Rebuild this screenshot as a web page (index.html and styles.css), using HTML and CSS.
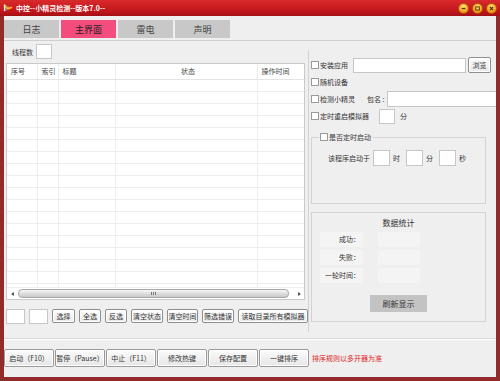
FILE: index.html
```html
<!DOCTYPE html>
<html lang="zh-CN">
<head>
  <meta charset="UTF-8">
  <title>中控--小精灵检测--版本7.0--</title>
  <link rel="stylesheet" href="styles.css">
</head>
<body>
  <div class="window">

    <!-- Title bar -->
    <div class="titlebar">
      <svg class="logo" width="10" height="10" viewBox="0 0 10 10">
        <path d="M1 1 L1 9 L9 5 Z" fill="#fff" opacity="0.25"/>
        <path d="M1.5 2 Q3 7 8.5 4.5" stroke="#ffb020" stroke-width="1.8" fill="none" stroke-linecap="round"/>
        <path d="M1.5 2 L1.5 8" stroke="#fff" stroke-width="1.2"/>
      </svg>
      <span class="title">中控--小精灵检测--版本7.0--</span>
      <div class="win-btns">
        <span class="win-btn">
          <svg width="10" height="10" viewBox="0 0 10 10"><path d="M3 5 H7" stroke="#5a2a00" stroke-width="1.4"/></svg>
        </span>
        <span class="win-btn">
          <svg width="10" height="10" viewBox="0 0 10 10"><rect x="3" y="3.2" width="4" height="3.6" stroke="#5a2a00" stroke-width="1" fill="none"/></svg>
        </span>
        <span class="win-btn">
          <svg width="10" height="10" viewBox="0 0 10 10"><path d="M3.2 3.2 L6.8 6.8 M6.8 3.2 L3.2 6.8" stroke="#5a2a00" stroke-width="1.4"/></svg>
        </span>
      </div>
    </div>

    <div class="client">
      <!-- Tabs -->
      <div class="tabs">
        <div class="tab">日志</div>
        <div class="tab active">主界面</div>
        <div class="tab">雷电</div>
        <div class="tab">声明</div>
      </div>

      <div class="main">
        <!-- Left: list -->
        <div class="left">
          <div class="thread-row">
            <span>线程数</span>
            <span class="box w16"></span>
          </div>

          <div class="grid">
            <div class="grid-body">
              <table>
                <colgroup>
                  <col style="width:30px">
                  <col style="width:21px">
                  <col style="width:57px">
                  <col style="width:142px">
                  <col style="width:47px">
                </colgroup>
                <thead>
                  <tr>
                    <th>序号</th>
                    <th>索引</th>
                    <th>标题</th>
                    <th class="center">状态</th>
                    <th>操作时间</th>
                  </tr>
                </thead>
                <tbody id="rows"></tbody>
              </table>
            </div>
            <div class="hscroll">
              <span class="arrow-left"></span>
              <div class="track"><span class="grip"></span></div>
              <span class="arrow-right"></span>
            </div>
          </div>

          <div class="btn-row">
            <span class="box w19"></span>
            <span class="box w19"></span>
            <button class="btn" style="width:23px">选择</button>
            <button class="btn" style="width:22px">全选</button>
            <button class="btn" style="width:22px">反选</button>
            <button class="btn" style="width:32px">清空状态</button>
            <button class="btn" style="width:31px">清空时间</button>
            <button class="btn" style="width:32px">筛选错误</button>
            <button class="btn" style="width:70px">读取目录所有模拟器</button>
          </div>
        </div>

        <!-- Right: settings -->
        <div class="side">
          <div class="opt">
            <span class="cb"></span><span>安装应用</span>
            <span class="box apk"></span>
            <button class="btn browse">浏览</button>
          </div>
          <div class="opt">
            <span class="cb"></span><span>随机设备</span>
          </div>
          <div class="opt">
            <span class="cb"></span><span>检测小精灵</span>
            <span class="pkg-label">包名 :</span>
            <span class="box pkg"></span>
          </div>
          <div class="opt">
            <span class="cb"></span><span>定时重启模拟器</span>
            <span class="box restart"></span>
            <span class="min-label">分</span>
          </div>

          <fieldset class="timer">
            <legend><span class="cb"></span>是否定时启动</legend>
            <div class="time-row">
              <span>该程序启动于</span>
              <span class="box w17"></span><span class="unit">时</span>
              <span class="box w17"></span><span class="unit">分</span>
              <span class="box w17"></span><span class="unit">秒</span>
            </div>
          </fieldset>

          <div class="stats">
            <div class="stats-title">数据统计</div>
            <div class="stat-row"><span class="stat-label">成功：</span><span class="stat-value"></span></div>
            <div class="stat-row"><span class="stat-label">失败：</span><span class="stat-value"></span></div>
            <div class="stat-row"><span class="stat-label">一轮时间：</span><span class="stat-value"></span></div>
            <button class="refresh">刷新显示</button>
          </div>
        </div>
      </div>

      <!-- Bottom toolbar -->
      <div class="footer">
        <button class="fbtn">启动（F10）</button>
        <button class="fbtn">暂停（Pause）</button>
        <button class="fbtn">中止（F11）</button>
        <button class="fbtn">修改热键</button>
        <button class="fbtn">保存配置</button>
        <button class="fbtn">一键排序</button>
        <span class="note">排序规则以多开器为准</span>
      </div>
    </div>
  </div>

  <script>
    // empty list rows
    const rows = document.getElementById("rows");
    for (let i = 0; i < 18; i++) {
      const tr = document.createElement("tr");
      tr.innerHTML = "<td></td><td></td><td></td><td></td><td></td>";
      rows.appendChild(tr);
    }
  </script>
</body>
</html>
```

FILE: styles.css
```css
* {
  box-sizing: border-box;
}

body {
  margin: 0;
  font-family: "Noto Sans CJK SC", "Liberation Sans", sans-serif;
  font-size: 7px;
  color: #333;
  background: #fff;
}

.window {
  width: 500px;
  height: 381px;
  background: #922b2b;
  display: flex;
  flex-direction: column;
}

/* Title bar */
.titlebar {
  height: 16px;
  background: linear-gradient(#d92a2c, #c0161b 70%, #a31015);
  display: flex;
  align-items: center;
  padding: 0 3px;
  color: #fff;
}

.logo {
  margin-right: 3px;
}

.title {
  font-size: 7px;
  font-weight: bold;
}

.win-btns {
  margin-left: auto;
  display: flex;
  gap: 3px;
}

.win-btn {
  width: 11px;
  height: 11px;
  border-radius: 50%;
  background: radial-gradient(circle at 50% 30%, #ffe27a, #f5a623 60%, #d9780c);
  border: 1px solid #b85a08;
  display: flex;
  align-items: center;
  justify-content: center;
}

.win-btn svg {
  width: 9px;
  height: 9px;
}

.client {
  flex: 1;
  margin: 0 4px 4px;
  background: #efefef;
  display: flex;
  flex-direction: column;
}

/* Tabs */
.tabs {
  display: flex;
  gap: 2px;
  height: 25px;
  padding: 4px 0 2px;
  border-bottom: 1px solid #cfcfcf;
}

.tab {
  width: 55px;
  background: #c8c8c8;
  display: flex;
  align-items: center;
  justify-content: center;
  font-size: 9px;
  color: #444;
}

.tab.active {
  background: #f24d7d;
  color: #222;
}

.main {
  display: flex;
  height: 297px;
}

/* Left column */
.left {
  width: 304px;
  padding: 3px 0 0 2px;
}

.thread-row {
  display: flex;
  align-items: center;
  gap: 3px;
  height: 15px;
  padding-left: 6px;
}

.box {
  display: inline-block;
  flex-shrink: 0;
  background: #fff;
  border: 1px solid #c6c6c6;
  height: 15px;
}

.w16 { width: 16px; }
.w17 { width: 17px; height: 16px; }
.w19 { width: 19px; }

.grid {
  margin-top: 4px;
  width: 299px;
  height: 237px;
  background: #fff;
  border: 1px solid #c9c9c9;
  display: flex;
  flex-direction: column;
}

.grid-body {
  flex: 1;
  overflow: hidden;
}

.grid table {
  border-collapse: collapse;
  table-layout: fixed;
  width: 297px;
}

.grid th {
  height: 15px;
  font-weight: normal;
  text-align: left;
  padding: 0 0 0 4px;
  color: #444;
  border-left: 1px solid #ededed;
  border-bottom: 1px solid #e4e4e4;
}

.grid th:first-child,
.grid td:first-child {
  border-left: none;
}

.grid th.center {
  text-align: center;
}

.grid td {
  height: 12px;
  border-left: 1px solid #eeeeee;
  border-bottom: 1px solid #eeeeee;
}

.hscroll {
  height: 12px;
  display: flex;
  align-items: center;
  border-top: 1px solid #f0f0f0;
}

.arrow-left {
  width: 0;
  height: 0;
  margin: 0 4px 0 4px;
  border-top: 2px solid transparent;
  border-bottom: 2px solid transparent;
  border-right: 3px solid #555;
}

.arrow-right {
  width: 0;
  height: 0;
  margin: 0 3px 0 9px;
  border-top: 2px solid transparent;
  border-bottom: 2px solid transparent;
  border-left: 3px solid #555;
}

.track {
  flex: 1;
  height: 9px;
  border: 1px solid #a8a8a8;
  border-radius: 4px;
  background: linear-gradient(#f7f7f7, #dedede 50%, #c9c9c9);
  display: flex;
  align-items: center;
  justify-content: center;
}

.grip {
  width: 5px;
  height: 3px;
  background: repeating-linear-gradient(90deg, #777 0 1px, transparent 1px 2px);
}

.btn-row {
  margin-top: 8px;
  display: flex;
  align-items: center;
  gap: 4px;
  height: 16px;
}

.btn {
  height: 14px;
  padding: 0;
  font-family: inherit;
  font-size: 7px;
  color: #333;
  background: linear-gradient(#fdfdfd, #e9e9e9);
  border: 1px solid #8e8e8e;
  border-radius: 2px;
  box-shadow: inset 0 0 0 1px #fff;
  white-space: nowrap;
  flex-shrink: 0;
}

/* Right column */
.side {
  flex: 1;
  margin-top: 9px;
  height: 282px;
  border-left: 1px solid #d2d2d2;
  padding: 7px 0 0 2px;
  min-width: 0;
  overflow: hidden;
}

.opt {
  display: flex;
  align-items: center;
  height: 16px;
  margin-bottom: 1px;
  white-space: nowrap;
}

.opt span {
  flex-shrink: 0;
}

.cb {
  display: inline-block;
  flex-shrink: 0;
  width: 8px;
  height: 8px;
  border: 1px solid #9a9a9a;
  background: #fff;
  margin-right: 1px;
}

.apk {
  width: 113px;
  margin-left: 5px;
}

.browse {
  width: 23px;
  height: 16px;
  margin-left: 2px;
}

.pkg-label {
  margin-left: 12px;
}

.pkg {
  width: 112px;
  height: 16px;
  margin-left: 2px;
}

.restart {
  width: 16px;
  margin-left: 10px;
}

.min-label {
  margin-left: 5px;
}

.timer {
  margin: 8px 0 0 0;
  width: 175px;
  height: 72px;
  border: 1px solid #d3d3d3;
  padding: 8px 0 0 16px;
}

.timer legend {
  margin-left: -9px;
  padding: 0 2px 0 1px;
  display: flex;
  align-items: center;
  line-height: 10px;
}

.time-row {
  display: flex;
  align-items: center;
  gap: 3px;
  white-space: nowrap;
}

.unit {
  width: 10px;
}

.stats {
  margin-top: 8px;
  width: 175px;
  height: 110px;
  border: 1px solid #d3d3d3;
  padding: 4px 0 0 8px;
  display: flex;
  flex-direction: column;
}

.stats-title {
  text-align: center;
  font-size: 8px;
  height: 12px;
  line-height: 12px;
  padding-right: 8px;
  margin-bottom: 3px;
}

.stat-row {
  display: flex;
  gap: 15px;
  margin-bottom: 3px;
}

.stat-label {
  width: 43px;
  height: 15px;
  line-height: 15px;
  text-align: right;
  padding-right: 3px;
  background: #f4f4f4;
}

.stat-value {
  width: 42px;
  height: 15px;
  background: #f4f4f4;
}

.refresh {
  align-self: center;
  margin: 9px 8px 0 0;
  width: 57px;
  height: 17px;
  border: none;
  background: #c3c3c3;
  font-family: inherit;
  font-size: 8px;
  color: #333;
}

/* Bottom toolbar */
.footer {
  flex: 1;
  border-top: 1px solid #d8d8d8;
  box-shadow: inset 0 1px 0 #fff;
  display: flex;
  align-items: flex-start;
  gap: 1px;
  padding: 10px 0 0 0;
}

.fbtn {
  width: 50px;
  height: 18px;
  padding: 0;
  font-family: inherit;
  font-size: 7px;
  color: #333;
  white-space: nowrap;
  background: linear-gradient(#fbfbfb, #e6e6e6);
  border: 1px solid #9a9a9a;
  border-radius: 2px;
  box-shadow: inset 0 0 0 1px #fff;
}

.note {
  margin-left: 2px;
  height: 18px;
  line-height: 18px;
  color: #e02222;
}
```
